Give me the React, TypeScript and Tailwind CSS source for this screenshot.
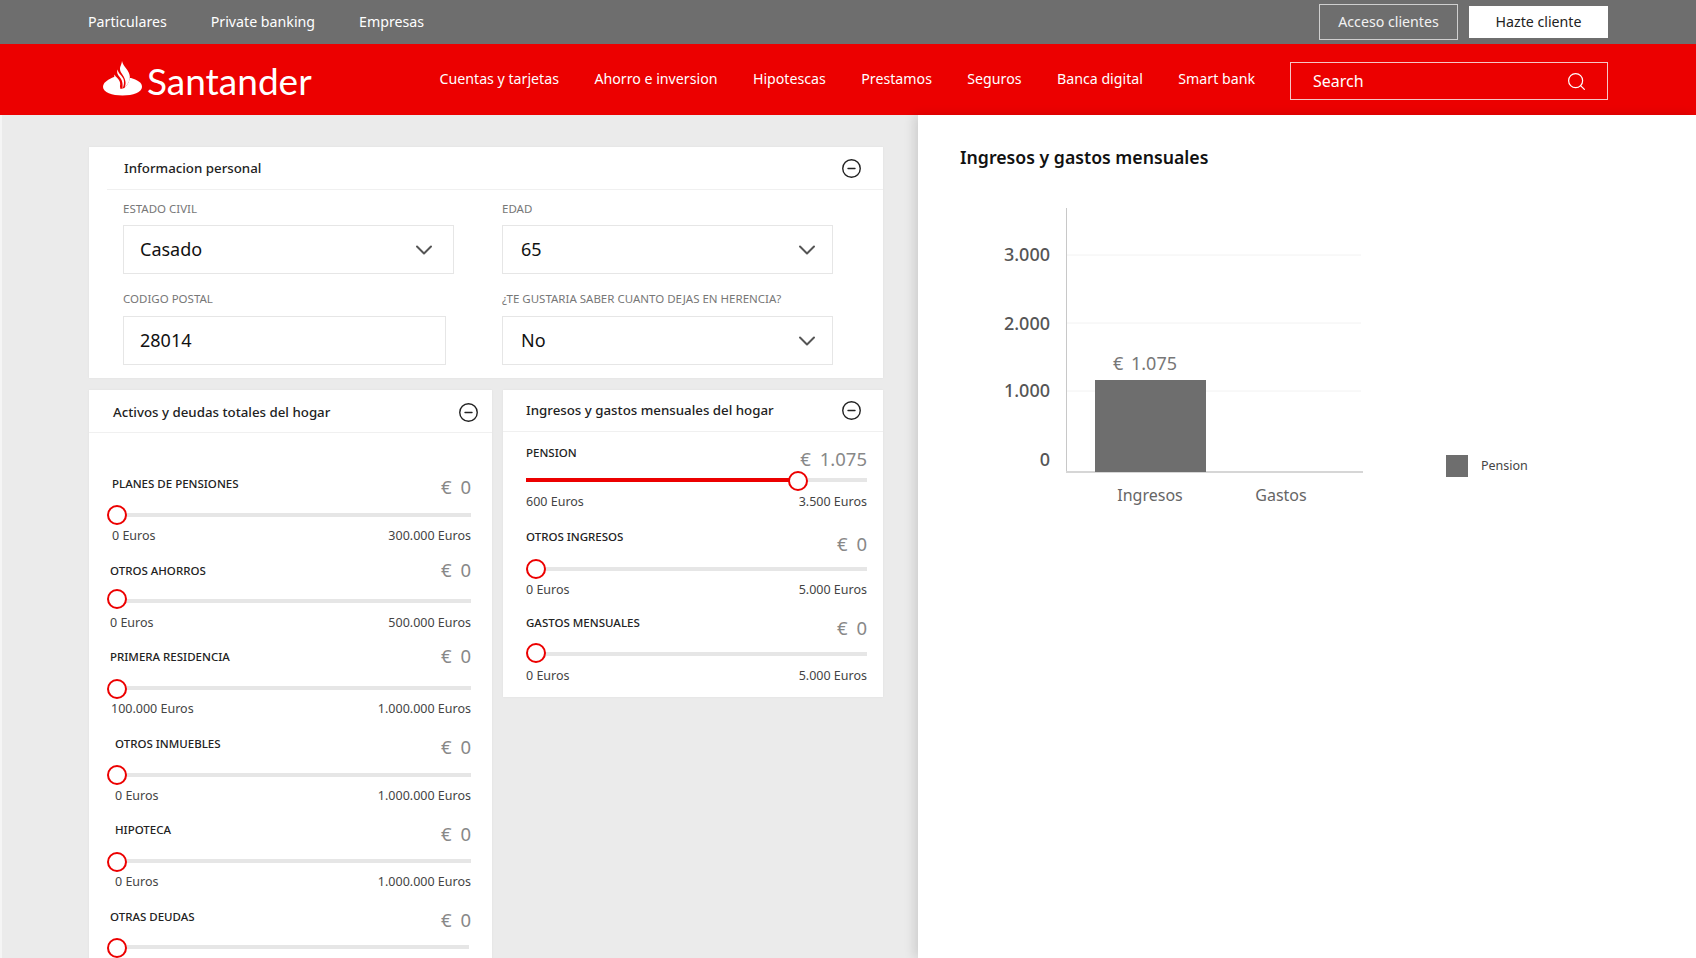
import React from 'react';
import { ChevronDown, CircleMinus, Search } from 'lucide-react';

const font = { fontFamily: '"Noto Sans", sans-serif' };

const topLinks = ['Particulares', 'Private banking', 'Empresas'];
const mainLinks = ['Cuentas y tarjetas', 'Ahorro e inversion', 'Hipotescas', 'Prestamos', 'Seguros', 'Banca digital', 'Smart bank'];

interface SliderRowData {
  label: string;
  value: string;
  min?: string;
  max?: string;
  rowClass: string;
  headClass: string;
  labelClass: string;
  valueClass: string;
  thumbClass: string;
  boundsClass?: string;
  trackClass?: string;
  fillClass?: string;
}

const assetRows: SliderRowData[] = [
  { label: 'PLANES DE PENSIONES', value: '€ 0', min: '0 Euros', max: '300.000 Euros', rowClass: 'mt-[43px]', headClass: 'h-[37px]', labelClass: 'pl-[2px]', valueClass: 'mt-[-1px]', thumbClass: 'top-[-8px] left-[-3px]', boundsClass: 'mt-[11px] pl-[2px]' },
  { label: 'OTROS AHORROS', value: '€ 0', min: '0 Euros', max: '500.000 Euros', rowClass: 'mt-[19px]', headClass: 'h-[36px]', labelClass: 'pl-0', valueClass: 'mt-[-5px]', thumbClass: 'top-[-10px] left-[-3px]', boundsClass: 'mt-[12px]' },
  { label: 'PRIMERA RESIDENCIA', value: '€ 0', min: '100.000 Euros', max: '1.000.000 Euros', rowClass: 'mt-[18px]', headClass: 'h-[37px]', labelClass: 'pl-0', valueClass: 'mt-[-5px]', thumbClass: 'top-[-7px] left-[-3px]', boundsClass: 'mt-[11px] pl-[1px]' },
  { label: 'OTROS INMUEBLES', value: '€ 0', min: '0 Euros', max: '1.000.000 Euros', rowClass: 'mt-[19px]', headClass: 'h-[37px]', labelClass: 'pl-[5px]', valueClass: 'mt-[-1px]', thumbClass: 'top-[-8px] left-[-3px]', boundsClass: 'mt-[11px] pl-[5px]' },
  { label: 'HIPOTECA', value: '€ 0', min: '0 Euros', max: '1.000.000 Euros', rowClass: 'mt-[18px]', headClass: 'h-[37px]', labelClass: 'pl-[5px]', valueClass: 'mt-0', thumbClass: 'top-[-7px] left-[-3px]', boundsClass: 'mt-[11px] pl-[5px]' },
  { label: 'OTRAS DEUDAS', value: '€ 0', rowClass: 'mt-[19px]', headClass: 'h-[36px]', labelClass: 'pl-0', valueClass: 'mt-[-1px]', thumbClass: 'top-[-7px] left-[-3px]', trackClass: 'mr-[2px]' },
];

const incomeRows: SliderRowData[] = [
  { label: 'PENSION', value: '€ 1.075', min: '600 Euros', max: '3.500 Euros', rowClass: 'mt-[13px]', headClass: 'h-[33px]', labelClass: 'pl-0', valueClass: 'mt-[2px]', thumbClass: 'top-[-7px] left-[262px]', boundsClass: 'mt-[12px]', fillClass: 'w-[272px]' },
  { label: 'OTROS INGRESOS', value: '€ 0', min: '0 Euros', max: '5.000 Euros', rowClass: 'mt-[19px]', headClass: 'h-[38px]', labelClass: 'pl-0', valueClass: 'mt-[3px]', thumbClass: 'top-[-8px] left-0', boundsClass: 'mt-[11px]' },
  { label: 'GASTOS MENSUALES', value: '€ 0', min: '0 Euros', max: '5.000 Euros', rowClass: 'mt-[17px]', headClass: 'h-[37px]', labelClass: 'pl-0', valueClass: 'mt-[1px]', thumbClass: 'top-[-9px] left-0', boundsClass: 'mt-[12px]' },
];

const SantanderLogo: React.FC = () => (
  <div className="flex h-[71px] w-[210px] flex-shrink-0 items-start pt-[17px]">
    <svg width="39" height="35" viewBox="0 0 39 35" fill="none" className="flex-shrink-0">
      <path d="M0 26C0 21 6 18 11 16L28 17C34 19 39 21 39 26C39 31 30 34.500 19.500 34.500C9 34.500 0 31 0 26Z" fill="white" />
      <path d="M11 15C14 19 17 23 17.500 28L21.500 27C24 24 26.800 21 26.800 15.500L19 0Z" fill="#ec0000" />
      <path d="M19 0C18.500 4 17 5 17 8C17 12 22 15 22.500 21C22.700 23 22.300 25 21.500 27C24 24 27 21 26.800 15.500C26.500 9 20 6 19 0Z" fill="white" />
      <path d="M14.500 8.500C13.500 12 15 14 17 16.500C19 19 20 21.500 19.500 27.500C21 24.500 21.500 21 20.500 18C19.500 15 15.500 13 14.500 8.500Z" fill="white" />
      <path d="M11.500 13.500C10.500 16 12 18 13.500 20.500C15 23 16 25 16 28.500C17.500 25 17.500 22 16.500 20C15 17 12.500 16 11.500 13.500Z" fill="white" />
    </svg>
    <span className="ml-[5px] mt-[-3px] text-[37px] leading-[46px] text-white" style={{ fontFamily: 'Lato, sans-serif' }}>Santander</span>
  </div>
);

const CardHeader: React.FC<{ title: string; className: string; titleClass?: string; iconClass?: string }> = ({ title, className, titleClass, iconClass }) => (
  <div className={`flex items-center justify-between border-b border-[#f0f0f0] ${className}`}>
    <span className={`text-[13.3px] font-medium text-[#222] ${titleClass ?? ''}`}>{title}</span>
    <CircleMinus size={21} strokeWidth={1.6} className={`text-[#222] ${iconClass ?? ''}`} />
  </div>
);

const Field: React.FC<{ label: string; value: string; boxClass: string; valueClass?: string; select?: boolean }> = ({ label, value, boxClass, valueClass, select = true }) => (
  <div>
    <div className="text-[11.5px] leading-4 text-[#777]">{label}</div>
    <div className={`flex h-[49px] items-center justify-between border border-[#e6e6e6] bg-white text-[18px] text-[#111] ${boxClass}`}>
      <span className={valueClass ?? 'pl-[15px]'}>{value}</span>
      {select && <ChevronDown size={28} strokeWidth={1.7} className="text-[#555]" />}
    </div>
  </div>
);

const SliderRow: React.FC<{ row: SliderRowData }> = ({ row }) => (
  <div className={row.rowClass}>
    <div className={`flex items-start justify-between ${row.headClass}`}>
      <span className={`text-[11.5px] font-medium leading-4 text-[#222] ${row.labelClass}`}>{row.label}</span>
      <span className={`whitespace-pre text-[18.5px] leading-6 text-[#888] [word-spacing:4px] ${row.valueClass}`}>{row.value}</span>
    </div>
    <div className={`relative h-1 bg-[#e6e6e6] ${row.trackClass ?? ''}`}>
      {row.fillClass && <div className={`h-1 bg-[#ec0000] ${row.fillClass}`} />}
      <div className={`absolute h-5 w-5 rounded-full border-2 border-[#ec0000] bg-white ${row.thumbClass}`} />
    </div>
    {row.min && (
      <div className={`flex justify-between text-[12.5px] leading-4 text-[#444] ${row.boundsClass ?? ''}`}>
        <span>{row.min}</span>
        <span>{row.max}</span>
      </div>
    )}
  </div>
);

const Chart: React.FC = () => {
  const ticks = [
    { label: '3.000', y: 64, labelY: 70 },
    { label: '2.000', y: 132, labelY: 139 },
    { label: '1.000', y: 200, labelY: 206 },
  ];
  return (
    <svg width="700" height="340" viewBox="0 0 700 340" className="mt-[20px] block" style={font}>
      {ticks.map(t => (
        <g key={t.label}>
          <line x1="106" x2="401" y1={t.y} y2={t.y} stroke="#f2f2f2" />
          <text x="90" y={t.labelY} textAnchor="end" fontSize="18" fontWeight="500" fill="#555">{t.label}</text>
        </g>
      ))}
      <text x="90" y="275" textAnchor="end" fontSize="18" fontWeight="500" fill="#555">0</text>
      <line x1="106.500" x2="106.500" y1="17" y2="281" stroke="#c8c8c8" />
      <line x1="106" x2="403" y1="281" y2="281" stroke="#d6d6d6" strokeWidth="2" />
      <rect x="135" y="189" width="111" height="92" fill="#6e6e6e" />
      <text x="185" y="179" textAnchor="middle" fontSize="18" fill="#777" wordSpacing="3">€ 1.075</text>
      <text x="190" y="310" textAnchor="middle" fontSize="16" fill="#666">Ingresos</text>
      <text x="321" y="310" textAnchor="middle" fontSize="16" fill="#666">Gastos</text>
      <rect x="486" y="264" width="22" height="22" fill="#6e6e6e" />
      <text x="521" y="279" fontSize="12.500" fill="#444">Pension</text>
    </svg>
  );
};

const App: React.FC = () => {
  return (
    <div className="flex h-screen flex-col overflow-hidden bg-white" style={font}>
      <header className="flex h-[44px] flex-shrink-0 items-center justify-between bg-[#6e6e6e] px-[88px] text-[14.2px] text-white">
        <nav className="flex gap-[44px]">
          {topLinks.map(link => <span key={link}>{link}</span>)}
        </nav>
        <div className="flex items-center gap-[11px]">
          <button className="h-[36px] w-[139px] border border-[#cfcfcf] text-[#f2f2f2]">Acceso clientes</button>
          <button className="h-[32px] w-[139px] bg-white text-[#222]">Hazte cliente</button>
        </div>
      </header>

      <div className="flex h-[71px] flex-shrink-0 items-center bg-[#ec0000] pl-[103px] pr-[88px] text-white">
        <SantanderLogo />
        <nav className="ml-[126.5px] flex gap-[35.4px] pb-[2px] text-[14.2px]">
          {mainLinks.map(link => <span key={link}>{link}</span>)}
        </nav>
        <div className="ml-auto mt-[18px] flex h-[38px] w-[318px] flex-shrink-0 self-start items-center justify-between border border-[#f6c6c6] pl-[22px] pr-[20px] text-[16px]">
          <span>Search</span>
          <Search size={21} strokeWidth={1.4} />
        </div>
      </div>

      <main className="flex min-h-0 flex-1">
        <div className="w-[918px] flex-shrink-0 overflow-hidden border-l-2 border-[#f5f5f5] bg-[#ebebeb] pl-[87px] pt-[32px]">
          <section className="h-[231px] w-[794px] bg-white shadow-[0_0_2px_rgba(0,0,0,0.06)]">
            <div className="pl-[18px]">
              <CardHeader title="Informacion personal" className="h-[43px] pl-[17px] pr-[21px]" titleClass="mt-[2px]" />
            </div>
            <div className="mt-[11px] grid grid-cols-[379px_1fr] gap-y-[17px] pl-[34px]">
              <Field label="ESTADO CIVIL" value="Casado" boxClass="mt-[8px] w-[331px] pr-[15px]" valueClass="pl-[16px]" />
              <Field label="EDAD" value="65" boxClass="mt-[8px] w-[331px] pr-[11px]" valueClass="pl-[18px]" />
              <Field label="CODIGO POSTAL" value="28014" boxClass="mt-[9px] w-[323px]" valueClass="pl-[16px]" select={false} />
              <Field label="¿TE GUSTARIA SABER CUANTO DEJAS EN HERENCIA?" value="No" boxClass="mt-[9px] w-[331px] pr-[11px]" valueClass="pl-[18px]" />
            </div>
          </section>

          <div className="mt-[12px] flex items-start gap-[11px]">
            <section className="w-[403px] bg-white pb-[60px] shadow-[0_0_2px_rgba(0,0,0,0.06)]">
              <CardHeader title="Activos y deudas totales del hogar" className="h-[43px] pl-[24px] pr-[13px]" titleClass="mt-[4px]" iconClass="mt-[2px]" />
              <div className="pl-[21px] pr-[21px]">
                {assetRows.map(row => <SliderRow key={row.label} row={row} />)}
              </div>
            </section>
            <section className="w-[380px] bg-white pb-[13px] shadow-[0_0_2px_rgba(0,0,0,0.06)]">
              <CardHeader title="Ingresos y gastos mensuales del hogar" className="h-[42px] pl-[23px] pr-[21px]" />
              <div className="pl-[23px] pr-[16px]">
                {incomeRows.map(row => <SliderRow key={row.label} row={row} />)}
              </div>
            </section>
          </div>
        </div>

        <div className="relative z-10 flex-1 bg-white pl-[42px] pt-[28px] shadow-[-4px_0_10px_rgba(0,0,0,0.12)]">
          <h2 className="text-[17.7px] font-semibold leading-7 text-[#111]">Ingresos y gastos mensuales</h2>
          <Chart />
        </div>
      </main>
    </div>
  );
};

export default App;
